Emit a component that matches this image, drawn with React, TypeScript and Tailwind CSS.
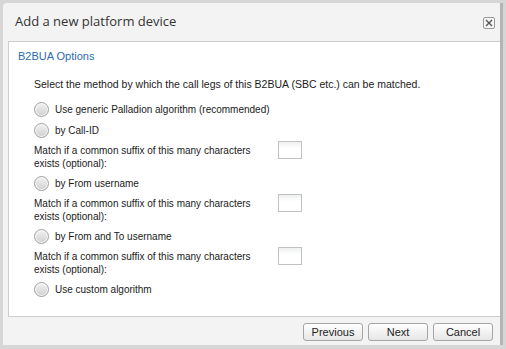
import React from "react";

const Radio = ({ label }: { label: string }) => (
  <label className="flex items-center gap-[6px] h-[15px]">
    <span className="w-[15px] h-[15px] rounded-full border border-[#a0a0a0] bg-gradient-to-b from-[#f2f2f2] to-[#d0d0d0] shadow-[inset_0_0_0_1px_#fafafa]" />
    <span className="text-[10px] text-[#1a1a1a] font-['Liberation_Sans',sans-serif]">{label}</span>
  </label>
);

const SuffixRow = () => (
  <div className="flex items-start">
    <p className="w-[244px] text-[10px] leading-[13px] text-[#1a1a1a] font-['Liberation_Sans',sans-serif]">
      Match if a common suffix of this many characters exists (optional):
    </p>
    <input className="w-[24px] h-[18px] mt-[-3px] border border-[#c2c2c2] bg-gradient-to-b from-[#eef0f0] to-white to-40% outline-none" />
  </div>
);

export default function App() {
  return (
    <div className="w-[506px] h-[349px] bg-[#d6d6d6] pt-[3px] pl-[3px] overflow-hidden">
      <div className="w-[500px] h-[342px] bg-[#f3f3f3] rounded-tl-[4px] border-r-[3px] border-[#b5b5b5] flex flex-col">
        <div className="h-[38px] flex items-center justify-between pl-[12px] pr-[5px]">
          <h1 className="text-[13px] text-[#333] font-['Open_Sans',sans-serif]">Add a new platform device</h1>
          <button className="w-[12px] h-[12px] border border-[#9a9a9a] rounded-[2px] bg-[#f4f4f4] flex items-center justify-center mt-[1px]">
            <svg width="8" height="8" viewBox="0 0 8 8">
              <path d="M1 1L7 7M7 1L1 7" stroke="#555" strokeWidth="1.4" />
            </svg>
          </button>
        </div>
        <div className="ml-[5px] h-[276px] bg-white border-t border-b border-l border-[#cdcdcd] px-[9px] pt-[6px]">
          <h2 className="text-[11px] text-[#2d6bb0] font-['Liberation_Sans',sans-serif]">B2BUA Options</h2>
          <div className="pl-[16px] pt-[13px] flex flex-col">
            <p className="text-[10.5px] leading-[13px] text-[#1a1a1a] font-['Liberation_Sans',sans-serif] mb-[11px]">
              Select the method by which the call legs of this B2BUA (SBC etc.) can be matched.
            </p>
            <div className="flex flex-col gap-[6px]">
              <Radio label="Use generic Palladion algorithm (recommended)" />
              <Radio label="by Call-ID" />
              <SuffixRow />
              <Radio label="by From username" />
              <SuffixRow />
              <Radio label="by From and To username" />
              <SuffixRow />
              <Radio label="Use custom algorithm" />
            </div>
          </div>
        </div>
        <div className="flex justify-end gap-[5px] pr-[7px] pt-[6px]">
          {["Previous", "Next", "Cancel"].map((b) => (
            <button
              key={b}
              className="w-[60px] h-[18px] rounded-[3px] border border-[#a5a5a5] bg-gradient-to-b from-white to-[#e6e6e6] text-[11px] text-[#222] font-['Liberation_Sans',sans-serif]"
            >
              {b}
            </button>
          ))}
        </div>
      </div>
    </div>
  );
}
